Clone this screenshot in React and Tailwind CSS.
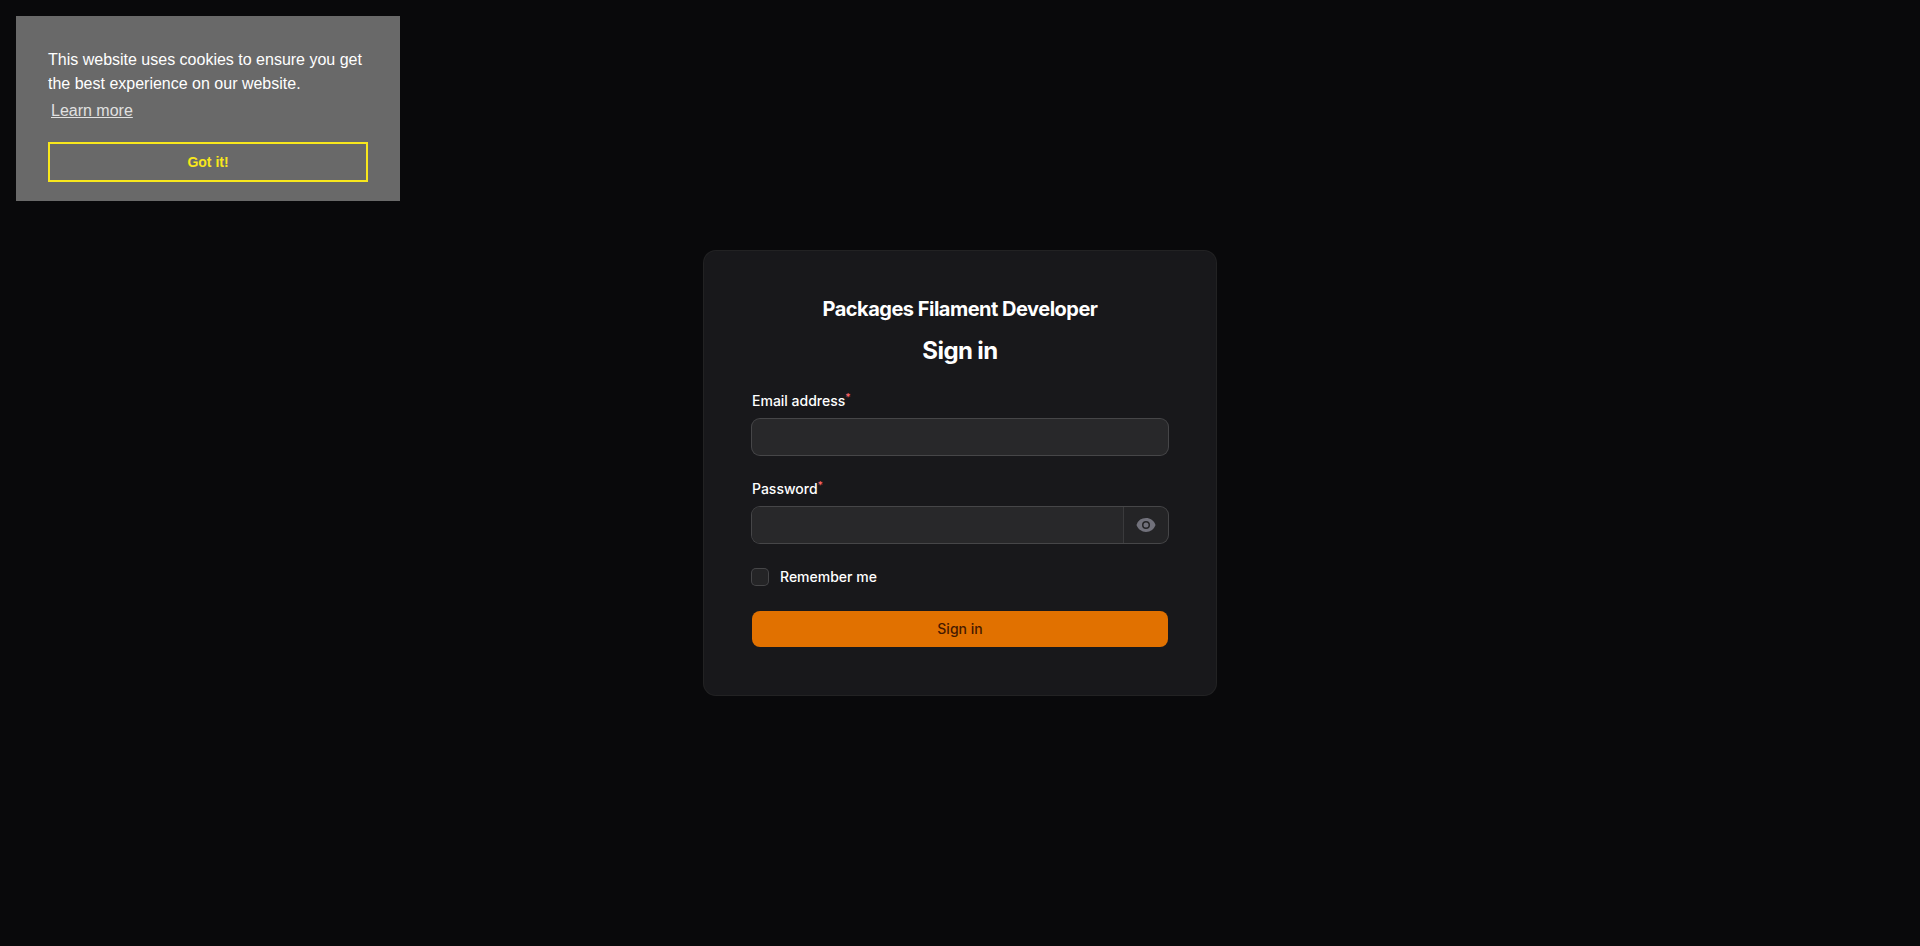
import React, { useState } from "react";

const EyeIcon = () => (
  <svg className="w-5 h-5" viewBox="0 0 20 20" fill="currentColor" aria-hidden="true">
    <path d="M10 12.5a2.5 2.5 0 1 0 0-5 2.5 2.5 0 0 0 0 5Z" />
    <path
      fillRule="evenodd"
      clipRule="evenodd"
      d="M.664 10.59a1.651 1.651 0 0 1 0-1.186A10.004 10.004 0 0 1 10 3c4.257 0 7.893 2.66 9.336 6.41.147.381.146.804 0 1.186A10.004 10.004 0 0 1 10 17c-4.257 0-7.893-2.66-9.336-6.41ZM14 10a4 4 0 1 1-8 0 4 4 0 0 1 8 0Z"
    />
  </svg>
);

const FieldLabel = ({ htmlFor, children }) => (
  <label htmlFor={htmlFor} className="block text-sm/5 font-medium text-white">
    {children}
    <sup className="font-medium text-red-400">*</sup>
  </label>
);

const CookieBanner = ({ onAccept }) => (
  <div
    role="dialog"
    aria-label="cookieconsent"
    className="fixed top-4 left-4 z-10 flex w-96 flex-col bg-[#696969] px-8 pt-8 pb-[19px] font-['Liberation_Sans',Arial,sans-serif] text-base/6 text-white"
  >
    <div className="mb-4">
      <p>This website uses cookies to ensure you get the best experience on our website.</p>
      <a href="#" className="inline-block p-[3px] underline opacity-80 hover:opacity-100">
        Learn more
      </a>
    </div>
    <button
      type="button"
      onClick={onAccept}
      className="h-10 w-full cursor-pointer border-2 border-[#f8e71c] text-sm font-bold text-[#f8e71c] hover:bg-white/10"
    >
      Got it!
    </button>
  </div>
);

const App = () => {
  const [showCookies, setShowCookies] = useState(true);
  const [showPassword, setShowPassword] = useState(false);

  const handleSubmit = (e) => {
    e.preventDefault();
  };

  return (
    <div className="flex min-h-screen flex-col items-center justify-center bg-zinc-950 font-[Inter,sans-serif] text-white antialiased">
      {showCookies && <CookieBanner onAccept={() => setShowCookies(false)} />}

      <main className="my-16 w-full max-w-lg rounded-xl bg-zinc-900 px-12 py-12 ring-1 ring-white/10">
        <header className="flex flex-col items-center">
          <div className="mb-4 text-xl/5 font-bold tracking-tight">Packages Filament Developer</div>
          <h1 className="text-2xl/8 font-bold tracking-tight">Sign in</h1>
        </header>

        <form onSubmit={handleSubmit} className="mt-6 grid gap-6">
          <div className="grid gap-2">
            <FieldLabel htmlFor="email">Email address</FieldLabel>
            <input
              id="email"
              type="email"
              autoComplete="email"
              className="h-9 w-full rounded-lg bg-[#28282a] px-3 text-sm ring-1 ring-white/20 outline-none focus:ring-2 focus:ring-amber-500"
            />
          </div>

          <div className="grid gap-2">
            <FieldLabel htmlFor="password">Password</FieldLabel>
            <div className="flex h-9 overflow-hidden rounded-lg bg-[#242426] ring-1 ring-white/20 focus-within:ring-2 focus-within:ring-amber-500">
              <input
                id="password"
                type={showPassword ? "text" : "password"}
                autoComplete="current-password"
                className="min-w-0 flex-1 bg-[#28282a] px-3 text-sm outline-none"
              />
              <button
                type="button"
                aria-label="Show password"
                onClick={() => setShowPassword(!showPassword)}
                className="flex cursor-pointer items-center border-l border-white/10 px-3 text-zinc-500 hover:text-zinc-400"
              >
                <EyeIcon />
              </button>
            </div>
          </div>

          <label htmlFor="remember" className="flex items-center gap-3 text-sm/5 font-medium">
            <input
              id="remember"
              type="checkbox"
              className="h-4 w-4 appearance-none rounded-sm bg-white/5 ring-1 ring-white/20 checked:bg-amber-500"
            />
            Remember me
          </label>

          <button
            type="submit"
            className="h-9 w-full cursor-pointer rounded-lg bg-[#e17100] text-sm font-medium text-[#461901] hover:bg-amber-500"
          >
            Sign in
          </button>
        </form>
      </main>
    </div>
  );
};

export default App;
